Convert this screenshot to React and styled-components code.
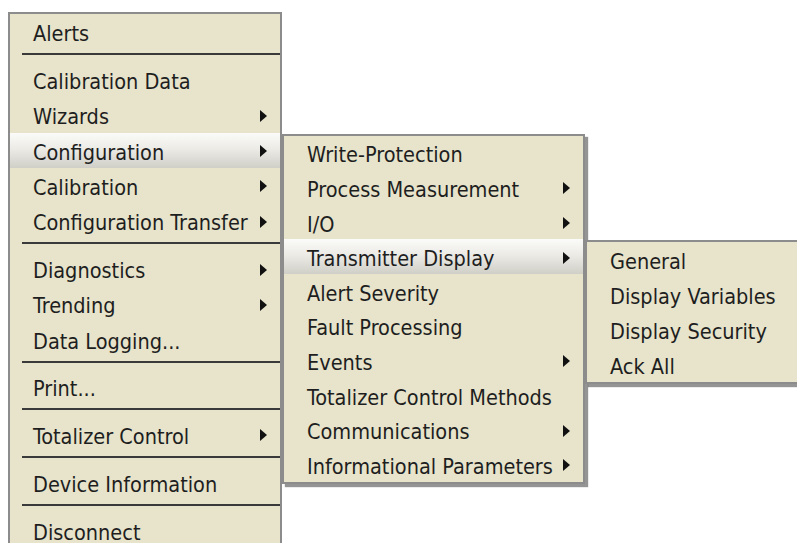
import React from 'react';
import styled, { createGlobalStyle } from 'styled-components';

const GlobalStyle = createGlobalStyle`
  html, body {
    margin: 0;
    padding: 0;
    background: #ffffff;
    overflow: hidden;
  }
  body {
    font-family: "DejaVu Sans Condensed", "Liberation Sans", Arial, sans-serif;
  }
`;

const Page = styled.div`
  width: 797px;
  height: 543px;
  overflow: hidden;
  padding: 12px 0 0 8px;
  box-sizing: border-box;
`;

const Menu = styled.div`
  box-sizing: border-box;
  width: ${p => p.$width}px;
  background: #e7e4cb;
  border: 2px solid #8c8c8c;
  display: flex;
  flex-direction: column;
  box-shadow: ${p => (p.$shadow ? '3px 3px 1px rgba(60, 60, 60, 0.55)' : 'none')};
  position: ${p => (p.$sub ? 'absolute' : 'relative')};
  left: ${p => (p.$sub ? 'calc(100% + 2px)' : 'auto')};
  top: ${p => (p.$sub ? `${p.$offsetTop}px` : 'auto')};
  z-index: 2;
`;

const Item = styled.div`
  position: relative;
  box-sizing: border-box;
  height: ${p => p.$h}px;
  flex-shrink: 0;
  display: flex;
  align-items: center;
  padding: 4px 13px 0 23px;
  font-size: 21.5px;
  color: #1e1e1e;
  white-space: nowrap;
  background: ${p =>
    p.$active
      ? 'linear-gradient(to bottom, #fbfbf9 0%, #ecebe6 45%, #cfcec7 100%)'
      : 'transparent'};
`;

const Label = styled.span`
  flex: 1;
`;

const Arrow = styled.span`
  width: 0;
  height: 0;
  border-top: 6px solid transparent;
  border-bottom: 6px solid transparent;
  border-left: 7px solid #111111;
  margin-left: 4px;
  margin-top: -2px;
`;

const Separator = styled.div`
  height: ${p => p.$h}px;
  flex-shrink: 0;
  padding: 4px 0 0 12px;
  box-sizing: border-box;
`;

const SeparatorLine = styled.div`
  height: 2px;
  background: #3a3a3a;
`;

const displayItems = ['General', 'Display Variables', 'Display Security', 'Ack All'];

const configItems = [
  { label: 'Write-Protection' },
  { label: 'Process Measurement', sub: true },
  { label: 'I/O', sub: true },
  { label: 'Transmitter Display', sub: true, open: true },
  { label: 'Alert Severity' },
  { label: 'Fault Processing' },
  { label: 'Events', sub: true },
  { label: 'Totalizer Control Methods' },
  { label: 'Communications', sub: true },
  { label: 'Informational Parameters', sub: true },
];

const mainItems = [
  { label: 'Alerts' },
  { sep: true },
  { label: 'Calibration Data' },
  { label: 'Wizards', sub: true },
  { label: 'Configuration', sub: true, open: true },
  { label: 'Calibration', sub: true },
  { label: 'Configuration Transfer', sub: true },
  { sep: true },
  { label: 'Diagnostics', sub: true },
  { label: 'Trending', sub: true },
  { label: 'Data Logging...' },
  { sep: true, h: 12 },
  { label: 'Print...' },
  { sep: true },
  { label: 'Totalizer Control', sub: true },
  { sep: true },
  { label: 'Device Information' },
  { sep: true },
  { label: 'Disconnect' },
];

const DisplayMenu = () => (
  <Menu $sub $width={216} $offsetTop={1} $shadow>
    {displayItems.map(label => (
      <Item key={label} $h={35}>
        <Label>{label}</Label>
      </Item>
    ))}
  </Menu>
);

const ConfigMenu = () => (
  <Menu $sub $width={303} $offsetTop={1} $shadow>
    {configItems.map(item => (
      <Item key={item.label} $h={34.6} $active={item.open}>
        <Label>{item.label}</Label>
        {item.sub && <Arrow />}
        {item.open && <DisplayMenu />}
      </Item>
    ))}
  </Menu>
);

export default function App() {
  return (
    <>
      <GlobalStyle />
      <Page>
        <Menu $width={274}>
          {mainItems.map((item, i) =>
            item.sep ? (
              <Separator key={i} $h={item.h || 13}>
                <SeparatorLine />
              </Separator>
            ) : (
              <Item key={item.label} $h={35.2} $active={item.open}>
                <Label>{item.label}</Label>
                {item.sub && <Arrow />}
                {item.open && <ConfigMenu />}
              </Item>
            )
          )}
        </Menu>
      </Page>
    </>
  );
}
